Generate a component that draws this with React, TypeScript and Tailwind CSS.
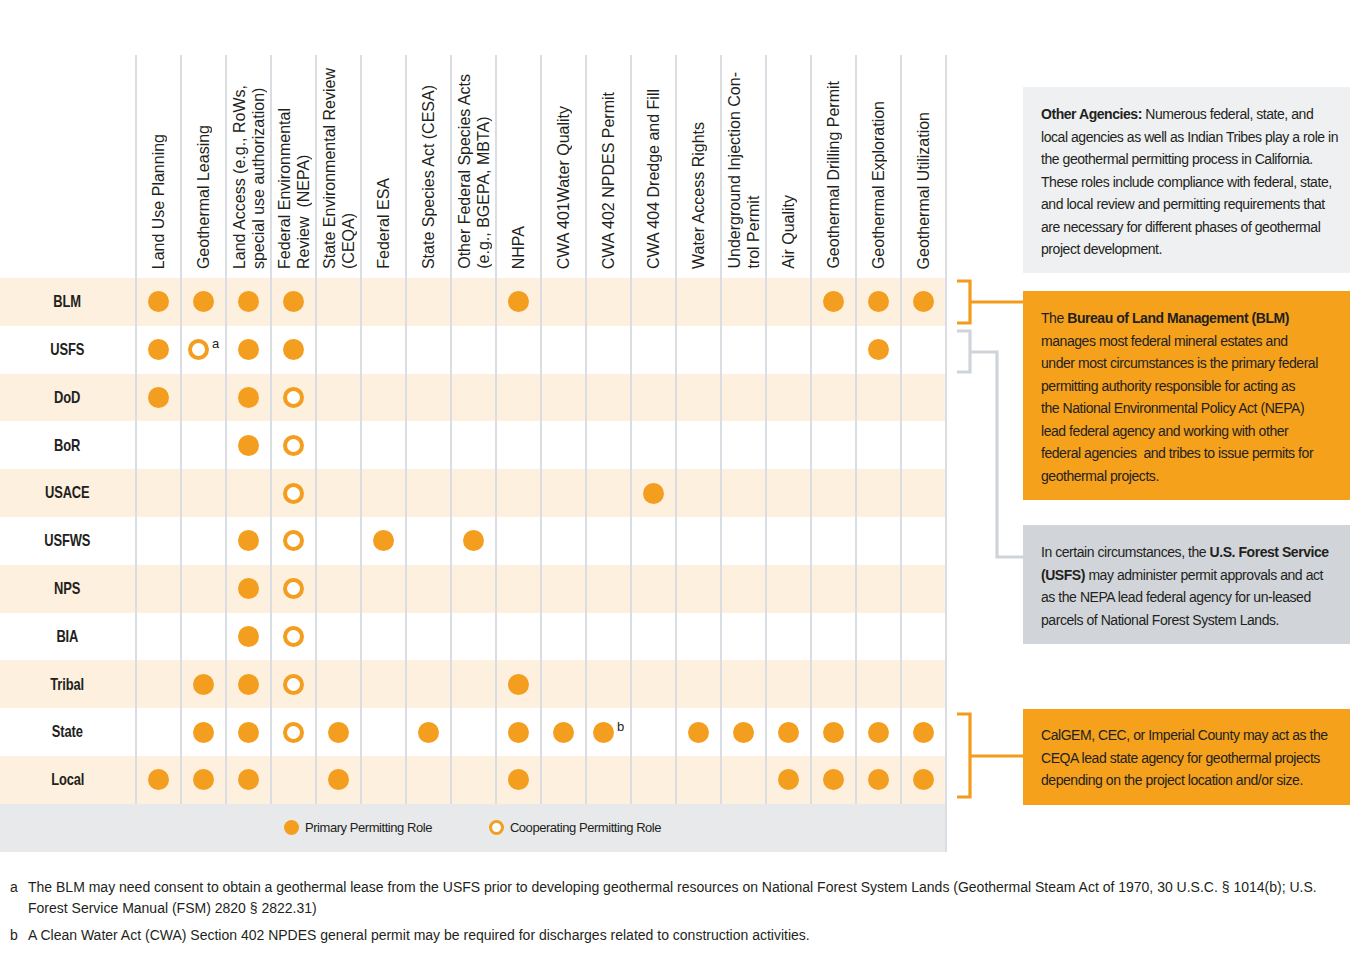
import React from "react";

const ORANGE = "bg-[#f49e1f]";

const columns: string[][] = [
    ["Land Use Planning"],
    ["Geothermal Leasing"],
    ["Land Access (e.g., RoWs,", "special use authorization)"],
    ["Federal Environmental", "Review  (NEPA)"],
    ["State Environmental Review", "(CEQA)"],
    ["Federal ESA"],
    ["State Species Act (CESA)"],
    ["Other Federal Species Acts", "(e.g., BGEPA, MBTA)"],
    ["NHPA"],
    ["CWA 401Water Quality"],
    ["CWA 402 NPDES Permit"],
    ["CWA 404 Dredge and Fill"],
    ["Water Access Rights"],
    ["Underground Injection Con-", "trol Permit"],
    ["Air Quality"],
    ["Geothermal Drilling Permit"],
    ["Geothermal Exploration"],
    ["Geothermal Utilization"],
];

// F = primary role, O = cooperating role, . = none
const agencies = [
    { name: "BLM", roles: "FFFF....F......FFF" },
    { name: "USFS", roles: "FOFF............F.", notes: { 1: "a" } as Record<number, string> },
    { name: "DoD", roles: "F.FO.............." },
    { name: "BoR", roles: "..FO.............." },
    { name: "USACE", roles: "...O.......F......" },
    { name: "USFWS", roles: "..FO.F.F.........." },
    { name: "NPS", roles: "..FO.............." },
    { name: "BIA", roles: "..FO.............." },
    { name: "Tribal", roles: ".FFO....F........." },
    { name: "State", roles: ".FFOF.F.FFF.FFFFFF", notes: { 10: "b" } as Record<number, string> },
    { name: "Local", roles: "FFF.F...F.....FFFF" },
];

// no condensed face is installed, so tighten Liberation Sans instead
const narrow = "font-['Liberation_Sans',Arial,sans-serif] tracking-[-0.45px]";
const regular = "font-['Liberation_Sans',Arial,sans-serif]";

function Dot({ kind }: { kind: string }) {
    if (kind === "F") return <span className={`block h-[21px] w-[21px] rounded-full ${ORANGE}`} />;
    return <span className="block h-[21px] w-[21px] rounded-full border-[4px] border-[#f49e1f] bg-white" />;
}

function Connectors() {
    return (
        <svg width="76" height="810" viewBox="947 0 76 810" className="shrink-0">
            <g fill="none" strokeWidth="3.2">
                <path d="M957 281 H970 V323 H957 M970 302 H1023" stroke="#f39c1c" />
                <path d="M957 331 H970 V372 H957 M970 352 H997 V557 H1023" stroke="#cfd4da" />
                <path d="M957 714 H970 V797 H957 M970 756 H1023" stroke="#f39c1c" />
            </g>
        </svg>
    );
}

export default function App() {
    return (
        <div className={`w-[1350px] h-[968px] overflow-hidden bg-white text-[#231f20] ${regular}`}>
            <div className="flex">
                {/* Matrix */}
                <div className="w-[947px] shrink-0">
                    <div className="h-[55px]" />
                    <div className="border-r-2 border-[#dadee3]">
                        <div className="flex h-[223px]">
                            <div className="w-[135px] shrink-0" />
                            {columns.map((lines, i) => (
                                <div
                                    key={i}
                                    className="flex w-[45px] shrink-0 items-end justify-center border-l-2 border-[#dadee3] pb-[9px]"
                                >
                                    <div className="rotate-180 whitespace-pre text-[16px] leading-[19px] [writing-mode:vertical-rl]">
                                        {lines.map((l, j) => (
                                            <div key={j}>{l}</div>
                                        ))}
                                    </div>
                                </div>
                            ))}
                        </div>

                        {agencies.map((a, r) => (
                            <div
                                key={a.name}
                                className={`flex h-[47.8px] ${r % 2 === 0 ? "bg-[#fdf0de]" : "bg-white"}`}
                            >
                                <div className="flex w-[135px] shrink-0 items-center justify-center">
                                    <span className="inline-block scale-x-[0.76] text-[17px] font-bold tracking-[-0.2px]">
                                        {a.name}
                                    </span>
                                </div>
                                {a.roles.split("").map((c, i) => (
                                    <div
                                        key={i}
                                        className="flex w-[45px] shrink-0 items-center justify-center border-l-2 border-[#dadee3]"
                                    >
                                        {c !== "." && (
                                            <div className="flex items-start gap-[3px]">
                                                <Dot kind={c} />
                                                {a.notes?.[i] && (
                                                    <span className={`-mt-[5px] text-[13px] leading-[20px] ${narrow}`}>
                                                        {a.notes[i]}
                                                    </span>
                                                )}
                                            </div>
                                        )}
                                    </div>
                                ))}
                            </div>
                        ))}

                        <div className={`flex h-[48px] items-center bg-[#e7e9eb] pl-[284px] text-[13px] ${narrow}`}>
                            <span className={`h-[15px] w-[15px] rounded-full ${ORANGE}`} />
                            <span className="ml-[6px]">Primary Permitting Role</span>
                            <span className="ml-[57px] h-[15px] w-[15px] rounded-full border-[3px] border-[#f49e1f] bg-white" />
                            <span className="ml-[6px]">Cooperating Permitting Role</span>
                        </div>
                    </div>
                </div>

                <Connectors />

                {/* Notes */}
                <div className={`flex w-[327px] shrink-0 flex-col whitespace-nowrap pt-[87px] text-[14px] leading-[22.5px] ${narrow}`}>
                    <div className="h-[186px] bg-[#eff0f1] pl-[18px] pt-[16px]">
                        <b>Other Agencies:</b> Numerous federal, state, and
                        <br />local agencies as well as Indian Tribes play a role in
                        <br />the geothermal permitting process in California.
                        <br />These roles include compliance with federal, state,
                        <br />and local review and permitting requirements that
                        <br />are necessary for different phases of geothermal
                        <br />project development.
                    </div>
                    <div className="mt-[18px] h-[209px] bg-[#f5a11c] pl-[18px] pt-[16px]">
                        The <b>Bureau of Land Management (BLM)</b>
                        <br />manages most federal mineral estates and
                        <br />under most circumstances is the primary federal
                        <br />permitting authority responsible for acting as
                        <br />the National Environmental Policy Act (NEPA)
                        <br />lead federal agency and working with other
                        <br />federal agencies&nbsp; and tribes to issue permits for
                        <br />geothermal projects.
                    </div>
                    <div className="mt-[25px] h-[119px] bg-[#d1d5da] pl-[18px] pt-[16px]">
                        In certain circumstances, the <b>U.S. Forest Service</b>
                        <br /><b>(USFS)</b> may administer permit approvals and act
                        <br />as the NEPA lead federal agency for un-leased
                        <br />parcels of National Forest System Lands.
                    </div>
                    <div className="mt-[65px] h-[96px] bg-[#f5a11c] pl-[18px] pt-[15px]">
                        CalGEM, CEC, or Imperial County may act as the
                        <br />CEQA lead state agency for geothermal projects
                        <br />depending on the project location and/or size.
                    </div>
                </div>
            </div>

            {/* Footnotes */}
            <div className="mt-[25px] text-[14px] leading-[21px]">
                <div className="flex">
                    <span className="w-[28px] shrink-0 pl-[10px]">a</span>
                    <span className="whitespace-nowrap">
                        The BLM may need consent to obtain a geothermal lease from the USFS prior to developing geothermal resources on National Forest System Lands (Geothermal Steam Act of 1970, 30 U.S.C. § 1014(b); U.S.
                        <br />Forest Service Manual (FSM) 2820 § 2822.31)
                    </span>
                </div>
                <div className="mt-[6px] flex">
                    <span className="w-[28px] shrink-0 pl-[10px]">b</span>
                    <span>A Clean Water Act (CWA) Section 402 NPDES general permit may be required for discharges related to construction activities.</span>
                </div>
            </div>
        </div>
    );
}
